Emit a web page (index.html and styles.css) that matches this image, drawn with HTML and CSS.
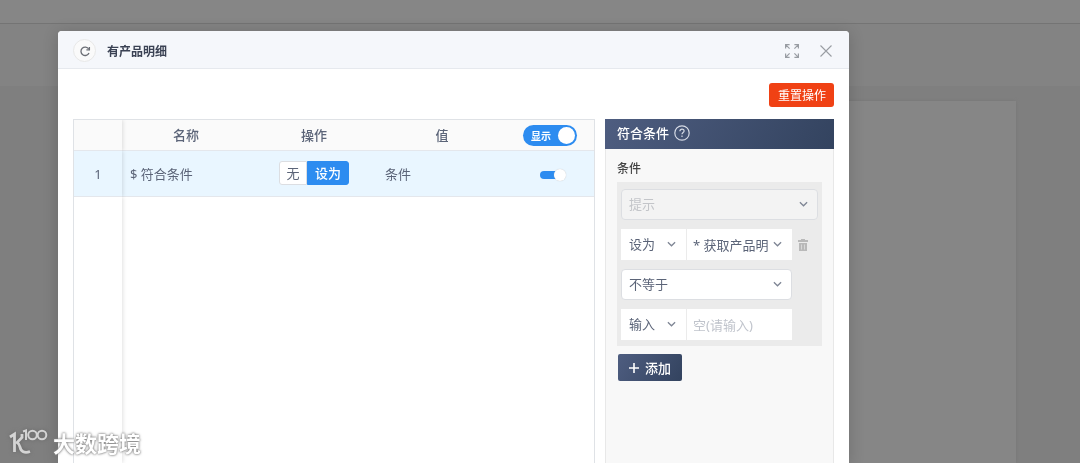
FILE: index.html
```html
<!DOCTYPE html>
<html lang="zh-CN">
<head>
<meta charset="utf-8">
<title>有产品明细</title>
<link rel="stylesheet" href="styles.css">
</head>
<body>
<div class="page">
  <div class="page-top"></div>
  <div class="page-tools"></div>
  <div class="page-canvas"><div class="page-sheet"></div></div>
</div>

<div class="overlay">
  <section class="modal" role="dialog" aria-labelledby="modal-title">
    <header class="modal-head">
      <button class="refresh" type="button" aria-label="刷新">
        <svg width="12" height="12" viewBox="0 0 12 12" fill="none" stroke="currentColor" stroke-width="1.3"><path d="M9.700 4A4.200 4.200 0 1 0 10 8"/><path d="M10.400 2v2.800H7.400"/></svg>
      </button>
      <h1 class="modal-title" id="modal-title">有产品明细</h1>
      <button class="head-icon" type="button" aria-label="全屏">
        <svg width="14" height="14" viewBox="0 0 14 14" fill="none" stroke="currentColor" stroke-width="1.2"><path d="M.6 4.600V.6h4M.6.6l4 4M9.400.6h4v4M13.400.6l-4 4M.6 9.400v4h4M.6 13.400l4-4M9.400 13.400h4v-4M13.400 13.400l-4-4"/></svg>
      </button>
      <button class="head-icon" type="button" aria-label="关闭">
        <svg width="14" height="14" viewBox="0 0 14 14" fill="none" stroke="currentColor" stroke-width="1.1"><path d="M1.500 1.500l11 11M12.500 1.500l-11 11"/></svg>
      </button>
    </header>

    <div class="modal-body">
      <div class="actions"><button class="reset" type="button">重置操作</button></div>
      <div class="columns">
        <div class="table-box">
          <table class="grid">
            <colgroup><col class="c-index"><col class="c-name"><col class="c-op"><col class="c-value"><col class="c-show"></colgroup>
            <thead>
              <tr>
                <th class="index"></th><th>名称</th><th>操作</th><th>值</th>
                <th><label class="switch-lg"><input type="checkbox" checked><span>显示</span></label></th>
              </tr>
            </thead>
            <tbody>
              <tr class="row">
                <td class="index">1</td>
                <td class="name">$ 符合条件</td>
                <td><div class="segmented"><button type="button">无</button><button class="on" type="button">设为</button></div></td>
                <td class="value">条件</td>
                <td class="show"><input class="switch-sm" type="checkbox" checked aria-label="显示"></td>
              </tr>
              <tr class="rest"><td class="index"></td><td colspan="4"></td></tr>
            </tbody>
          </table>
        </div>

        <aside class="panel">
          <h2 class="panel-head">符合条件
            <svg width="16" height="16" viewBox="0 0 16 16" fill="none" stroke="currentColor" stroke-width="1.2"><circle cx="8" cy="8" r="7.2"/><path d="M5.900 6.300c0-1.300.9-2.100 2.100-2.100s2.100.8 2.100 1.900c0 1.400-2.100 1.500-2.100 3.200"/><path d="M8 10.600v1.400"/></svg>
          </h2>
          <div class="panel-body">
            <h3 class="label">条件</h3>
            <div class="condition">
              <div class="select full disabled"><select disabled aria-label="提示"><option>提示</option></select><svg class="chev" viewBox="0 0 10 6"><path d="M1 1l4 4 4-4"/></svg></div>
              <div class="line">
                <div class="pair">
                  <div class="select"><select aria-label="方式"><option>设为</option></select><svg class="chev" viewBox="0 0 10 6"><path d="M1 1l4 4 4-4"/></svg></div>
                  <div class="select source"><select aria-label="来源"><option>* 获取产品明细</option></select><svg class="chev" viewBox="0 0 10 6"><path d="M1 1l4 4 4-4"/></svg></div>
                </div>
                <button class="trash" type="button" aria-label="删除"><svg width="10" height="12" viewBox="0 0 10 12"><path fill="currentColor" d="M3 0h4v1h3v2H0V1h3zM1 4h8v8H1z"/><path stroke="#d8d8d8" d="M3.500 5.500v5M6.500 5.500v5"/></svg></button>
              </div>
              <div class="select mid"><select aria-label="比较"><option>不等于</option></select><svg class="chev" viewBox="0 0 10 6"><path d="M1 1l4 4 4-4"/></svg></div>
              <div class="pair">
                <div class="select"><select aria-label="类型"><option>输入</option></select><svg class="chev" viewBox="0 0 10 6"><path d="M1 1l4 4 4-4"/></svg></div>
                <input class="text" type="text" placeholder="空(请输入)" aria-label="值">
              </div>
            </div>
            <button class="add" type="button"><svg width="10" height="10" viewBox="0 0 10 10" stroke="currentColor" stroke-width="1.600"><path d="M5 0v10M0 5h10"/></svg>添加</button>
          </div>
        </aside>
      </div>
    </div>
  </section>
</div>

<div class="watermark">
  <svg width="40" height="28" viewBox="0 0 40 28" fill="none" stroke="currentColor" stroke-width="2.800"><path d="M1 8l4.500-3v18"/><path d="M13 5v3.500l-5 5c2 1 2.500 2 3 4.500.8 4.500 4.500 6.500 10 4.500"/><g stroke-width="2"><path d="M14 2.500l3-1V11"/><circle cx="23.500" cy="6" r="4.300"/><circle cx="33" cy="6" r="4.300"/></g></svg>
  <span>大数跨境</span>
</div>
</body>
</html>
```
FILE: styles.css
```css
* { box-sizing: border-box; }

body {
  margin: 0;
  height: 100vh;
  overflow: hidden;
  font: 13px/20px "Noto Sans", "Noto Sans CJK SC", sans-serif;
  color: #5b6478;
}

button, input, select { font: inherit; color: inherit; margin: 0; }
button { border: 0; padding: 0; background: none; cursor: pointer; }
h1, h2, h3 { margin: 0; }
svg { display: block; flex: none; }

.page { height: 100%; display: flex; flex-direction: column; background: #7f7f7f; }
.page-top { height: 24px; background: #868686; border-bottom: 1px solid #747474; }
.page-tools { height: 62px; background: #838383; }
.page-canvas { flex: 1; display: flex; padding: 15px 64px 0; }
.page-sheet { flex: 1; background: #868686; box-shadow: 0 0 3px #777; }

.overlay { position: fixed; inset: 0; display: flex; padding: 31px 231px 0 58px; }
.modal {
  flex: 1;
  display: flex;
  flex-direction: column;
  background: #fff;
  border-radius: 4px 4px 0 0;
  box-shadow: 0 2px 16px rgba(0, 0, 0, .18);
  overflow: hidden;
}
.modal-head {
  display: flex;
  align-items: center;
  height: 38px;
  padding: 2px 16px 0 15px;
  background: #f5f7fb;
  border-bottom: 1px solid #e6e9ee;
}
.refresh {
  display: grid;
  place-items: center;
  width: 23px;
  height: 23px;
  border: 1px solid #e8e8e8;
  border-radius: 50%;
  background: #fafafa;
  color: #6b6e75;
}
.modal-title { flex: 1; margin-left: 11px; padding-top: 2px; font-size: 12px; font-weight: 700; color: #3b4254; }
.head-icon { margin-left: 20px; color: #999da3; }

.modal-body { flex: 1; display: flex; flex-direction: column; padding: 14px 15px 0; }
.actions { display: flex; justify-content: flex-end; margin-bottom: 12px; }
.reset { height: 24px; padding: 2px 8px 0 9px; border-radius: 3px; background: #f04114; color: #fff; font-size: 12px; }
.columns { flex: 1; display: grid; grid-template-columns: minmax(0, 1fr) 229px; gap: 10px; }

.table-box { border: 1px solid #dfe2e6; border-bottom: 0; }
.grid { width: 100%; height: 100%; table-layout: fixed; border-collapse: separate; border-spacing: 0; }
.c-index { width: 48px; }
.c-show { width: 88px; }
.grid th, .grid td { padding: 0; border-bottom: 1px solid #e4e7ec; }
.grid th { height: 31px; background: #fafafa; font-weight: 500; }
.row td { height: 46px; background: #e9f6ff; }
.grid .index { position: relative; text-align: center; box-shadow: 1px 0 4px rgba(0, 0, 0, .12); clip-path: inset(0 -6px 0 0); }
.grid .rest td { border: 0; }
.grid .name { padding-left: 8px; }
.grid .value { padding-left: 7px; }
.grid .show { padding-left: 6px; text-align: center; }

.switch-lg {
  display: inline-flex;
  align-items: center;
  position: relative;
  width: 54px;
  height: 21px;
  padding-left: 8px;
  border-radius: 11px;
  background: #2d8cf0;
  color: #fff;
  font-size: 10px;
  font-weight: 700;
  vertical-align: middle;
}
.switch-lg input { position: absolute; opacity: 0; }
.switch-lg::after { content: ""; width: 17px; height: 17px; margin: 0 2px 0 auto; border-radius: 50%; background: #fff; }
.switch-sm {
  appearance: none;
  display: inline-flex;
  align-items: center;
  justify-content: flex-end;
  width: 26px;
  height: 8px;
  background: linear-gradient(#2d8cf0, #2d8cf0) left / 20px 8px no-repeat;
  border-radius: 4px;
  vertical-align: middle;
}
.switch-sm::after { content: ""; flex: none; width: 12px; height: 12px; border-radius: 50%; background: #fff; box-shadow: 0 0 1px #bbb; }

.segmented { display: flex; height: 24px; margin: -2px 0 0 29px; }
.segmented button { width: 28px; border: 1px solid #dcdee2; border-radius: 3px 0 0 3px; background: #fff; }
.segmented .on { width: 42px; border-color: #2d8cf0; border-radius: 0 3px 3px 0; background: #2d8cf0; color: #fff; font-weight: 500; }

.panel { background: #f8f8f8; border: 1px solid #e8e8e8; border-width: 0 1px; }
.panel-head {
  display: flex;
  align-items: center;
  gap: 5px;
  height: 30px;
  margin: 0 -1px;
  padding: 0 12px 2px;
  background: linear-gradient(120deg, #4e5d80, #33435f);
  color: #fff;
  font-size: 13px;
  font-weight: 500;
}
.panel-head svg { color: #d5dae5; }
.panel-body { padding: 10px 11px; }
.label { margin-bottom: 3px; font-size: 12px; font-weight: 500; color: #444; }
.condition { display: flex; flex-direction: column; gap: 9px; padding: 7px 4px 6px; background: #ebebeb; }
.select { position: relative; height: 31px; }
.select select {
  appearance: none;
  width: 100%;
  height: 100%;
  padding: 0 22px 2px 7px;
  border: 1px solid #fff;
  border-radius: 0;
  background: #fff;
  opacity: 1;
}
.chev { position: absolute; right: 10px; top: 12px; width: 9px; height: 6px; fill: none; stroke: #7e8594; stroke-width: 1.4; pointer-events: none; }
.full select, .mid select { border-color: #dcdee2; border-radius: 4px; }
.select.disabled select { background: #f3f3f3; color: #c3c5c9; }
.mid { width: 171px; }
.line { display: flex; align-items: center; gap: 6px; }
.pair { display: grid; grid-template-columns: 65px 105px; gap: 1px; width: 171px; }
.text { width: 100%; height: 31px; padding: 0 6px; border: 0; border-radius: 0; background: #fff; }
.text::placeholder { color: #c0c4cc; opacity: 1; }
.select.source select { padding: 0 23px 0 5px; }
.trash { color: #b9b9b9; }
.add {
  display: flex;
  align-items: center;
  gap: 6px;
  height: 27px;
  margin: 8px 0 0 1px;
  padding: 0 11px;
  border-radius: 2px;
  background: linear-gradient(120deg, #4e5d80, #33435f);
  color: #fff;
  font-weight: 500;
}

.watermark {
  position: fixed;
  left: 9px;
  bottom: 6px;
  display: flex;
  align-items: center;
  gap: 4px;
  color: #d4d4d4;
  font-size: 22px;
  line-height: 28px;
  font-weight: 700;
}
.watermark svg { filter: drop-shadow(0 0 2px #666); }
.watermark span { color: #fff; text-shadow: 0 0 3px #777, 0 0 2px #999; }
```
